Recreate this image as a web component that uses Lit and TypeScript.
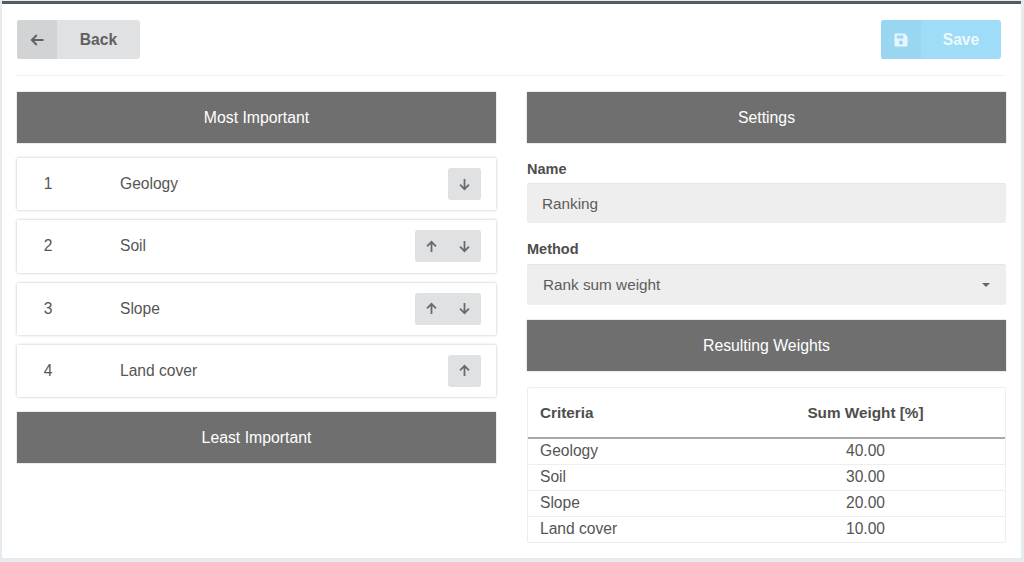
import { LitElement, html, css } from "lit";
import { customElement } from "lit/decorators.js";

const arrow = (d: string) => html`<svg class="ic" viewBox="0 0 14 14" aria-hidden="true"><path d=${d} fill="none" stroke="currentColor" stroke-width="1.9"/></svg>`;
const UP = "M7 13V2M2.2 6.8L7 2l4.8 4.8";
const DOWN = "M7 1v11M2.2 7.2L7 12l4.8-4.8";
const LEFT = "M14 7H2.5M7.3 2L2.3 7l5 5";

const rows = [
  { n: 1, name: "Geology", up: false, down: true },
  { n: 2, name: "Soil", up: true, down: true },
  { n: 3, name: "Slope", up: true, down: true },
  { n: 4, name: "Land cover", up: true, down: false },
];
const weights = [
  ["Geology", "40.00"],
  ["Soil", "30.00"],
  ["Slope", "20.00"],
  ["Land cover", "10.00"],
];

@customElement("app-root")
export class AppRoot extends LitElement {
  static styles = css`
    :host {
      display: block;
      width: 1024px;
      height: 562px;
      overflow: hidden;
      background: #e6ebf0;
      font-family: "Liberation Sans", Arial, sans-serif;
      font-size: 15.6px;
      color: #555;
    }
    .frame {
      box-sizing: border-box;
      margin-left: 2px;
      margin-top: 1px;
      width: 1019px;
      height: 557px;
      background: #fff;
      border-top: 3px solid #555a5e;
      padding: 16px 16px 0 15px;
    }
    .toolbar {
      display: flex;
      justify-content: space-between;
      height: 39px;
      padding-right: 4px;
      padding-bottom: 16px;
      border-bottom: 1px solid #efefef;
      margin-bottom: 16px;
    }
    .btn {
      display: flex;
      align-items: stretch;
      border-radius: 3px;
      overflow: hidden;
      font-weight: 700;
      width: 123px;
    }
    .btn .icon {
      width: 40px;
      display: flex;
      align-items: center;
      justify-content: center;
    }
    .btn .label {
      flex: 1;
      display: flex;
      align-items: center;
      justify-content: center;
    }
    .back {
      background: #e0e1e3;
      color: #606060;
    }
    .back .icon {
      background: #d2d3d5;
      padding-right: 2px;
      box-sizing: border-box;
    }
    .back .ic {
      width: 15px;
      height: 14px;
    }
    .save {
      width: 120px;
      background: #9edcf8;
      color: #eef9fe;
    }
    .save .icon {
      background: #98d6f2;
    }
    .save svg {
      width: 14px;
      height: 14px;
    }
    .cols {
      display: grid;
      grid-template-columns: 479px 479px;
      column-gap: 31px;
    }
    .col {
      display: flex;
      flex-direction: column;
    }
    .bar {
      height: 51px;
      background: #6f6f6f;
      color: #fff;
      font-size: 15.8px;
      box-shadow: 0 0 1px rgba(0, 0, 0, 0.45);
      display: flex;
      align-items: center;
      justify-content: center;
    }
    .list {
      display: flex;
      flex-direction: column;
      gap: 10px;
      margin: 15px 0;
    }
    .row {
      height: 52.25px;
      background: #fff;
      box-shadow: 0 0 3px rgba(0, 0, 0, 0.26);
      border-radius: 1px;
      display: flex;
      align-items: center;
      padding-right: 15px;
    }
    .row .num {
      width: 62px;
      text-align: center;
    }
    .row .title {
      margin-left: 41px;
      flex: 1;
    }
    .group {
      display: flex;
      height: 32px;
      background: #e0e1e3;
      border-radius: 3px;
      color: #6a6a6a;
    }
    .arrow {
      width: 33px;
      display: flex;
      align-items: center;
      justify-content: center;
    }
    .arrow .ic {
      width: 13px;
      height: 13px;
    }
    .lbl {
      font-weight: 700;
      font-size: 14.5px;
      line-height: 16px;
      color: #4e4e4e;
    }
    .name-lbl {
      margin-top: 18px;
      margin-bottom: 6px;
    }
    .method-lbl {
      margin-top: 18px;
      margin-bottom: 7px;
    }
    .field {
      box-sizing: border-box;
      background: #eee;
      border-radius: 2px;
      display: flex;
      align-items: center;
      color: #5c5c5c;
      font-size: 15.3px;
      box-shadow: inset 0 1px 1px rgba(0, 0, 0, 0.04);
    }
    .name {
      height: 40px;
      padding: 2px 0 0 15px;
    }
    .method {
      height: 41px;
      padding: 0 16px 0 16px;
      justify-content: space-between;
      margin-bottom: 15px;
    }
    .caret {
      width: 0;
      height: 0;
      border-left: 4.5px solid transparent;
      border-right: 4.5px solid transparent;
      border-top: 4.5px solid #666;
    }
    .table {
      margin-top: 16px;
      border: 1px solid #eee;
      border-radius: 2px;
      box-sizing: border-box;
      height: 156px;
    }
    table {
      width: 100%;
      border-collapse: collapse;
      table-layout: fixed;
    }
    th {
      height: 50px;
      padding: 0 12px;
      font-weight: 700;
      font-size: 15.3px;
      color: #4e4e4e;
      border-bottom: 2px solid #a9a9a9;
      text-align: left;
      box-sizing: border-box;
    }
    td {
      height: 26px;
      padding: 0 12px;
      border-top: 1px solid #eee;
      box-sizing: border-box;
    }
    tr:first-child td {
      border-top: none;
    }
    .c2 {
      width: 273px;
      text-align: center;
      padding-right: 18px;
    }
  `;

  render() {
    return html`
      <div class="frame">
        <div class="toolbar">
          <div class="btn back">
            <span class="icon">${arrow(LEFT)}</span><span class="label">Back</span>
          </div>
          <div class="btn save">
            <span class="icon">
              <svg viewBox="0 0 14 14" aria-hidden="true">
                <path fill="#e6f6fd" fill-rule="evenodd" d="M1.5 0.5H10.5L13.5 3.5V12a1.5 1.5 0 0 1-1.5 1.5H2A1.5 1.5 0 0 1 0.5 12V2A1.5 1.5 0 0 1 1.5 0.5ZM2.8 2.4V5.4H9.4V2.4ZM7 7.6a2.1 2.1 0 1 0 0 4.2a2.1 2.1 0 1 0 0-4.2Z"/>
              </svg>
            </span>
            <span class="label">Save</span>
          </div>
        </div>
        <div class="cols">
          <div class="col">
            <div class="bar">Most Important</div>
            <div class="list">
              ${rows.map(
                (r) => html`<div class="row">
                  <span class="num">${r.n}</span>
                  <span class="title">${r.name}</span>
                  <span class="group">
                    ${r.up ? html`<span class="arrow">${arrow(UP)}</span>` : ""}
                    ${r.down ? html`<span class="arrow">${arrow(DOWN)}</span>` : ""}
                  </span>
                </div>`
              )}
            </div>
            <div class="bar">Least Important</div>
          </div>
          <div class="col">
            <div class="bar">Settings</div>
            <div class="lbl name-lbl">Name</div>
            <div class="field name">Ranking</div>
            <div class="lbl method-lbl">Method</div>
            <div class="field method"><span>Rank sum weight</span><span class="caret"></span></div>
            <div class="bar">Resulting Weights</div>
            <div class="table">
              <table>
                <thead>
                  <tr><th>Criteria</th><th class="c2">Sum Weight [%]</th></tr>
                </thead>
                <tbody>
                  ${weights.map(
                    ([a, b]) => html`<tr><td>${a}</td><td class="c2">${b}</td></tr>`
                  )}
                </tbody>
              </table>
            </div>
          </div>
        </div>
      </div>
    `;
  }
}
